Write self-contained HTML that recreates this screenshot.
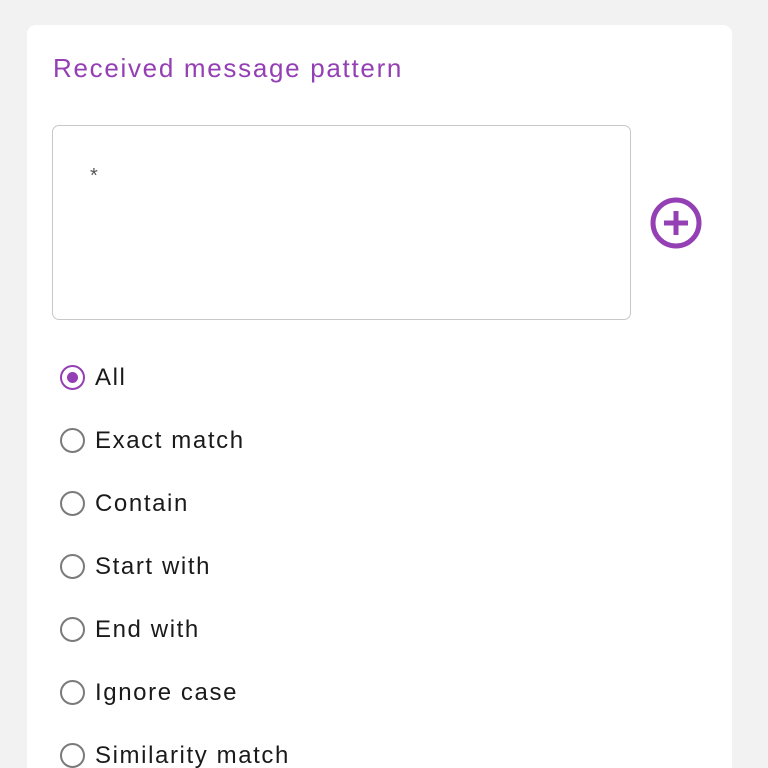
<!DOCTYPE html>
<html style="overflow:hidden"><head><style>
html,body{overflow:hidden;height:768px}
body{margin:0;width:768px;background:#f2f2f2;font-family:"Liberation Sans",sans-serif;position:relative}
.card{position:absolute;left:27px;top:25px;width:705px;height:760px;background:#fff;border-radius:9px}
.title{position:absolute;left:53px;top:53px;font-size:26px;color:#9440b4;letter-spacing:1.7px}
.box{position:absolute;left:52px;top:125px;width:577px;height:193px;border:1.5px solid #c8c8c8;border-radius:7px;background:#fff}
.star{position:absolute;left:90px;top:165px;font-size:20px;color:#555}
.r{position:absolute;left:60px;height:28px;font-size:24px;color:#1a1a1a;line-height:28px}
.r i{position:absolute;left:0;top:1px;width:25px;height:25px;border:2.5px solid #7a7a7a;border-radius:50%;box-sizing:border-box}
.r.on i{border-color:#9440b4}
.r.on i:after{content:"";position:absolute;left:4.5px;top:4.5px;width:11px;height:11px;border-radius:50%;background:#9440b4}
.r span{position:absolute;left:35px;top:0px;white-space:nowrap;letter-spacing:1.6px}
</style></head><body>
<div class="card"></div>
<div class="title">Received message pattern</div>
<div class="box"></div>
<div class="star">*</div>
<svg style="position:absolute;left:650px;top:197px" width="54" height="54" viewBox="0 0 54 54"><circle cx="26" cy="26" r="23" fill="none" stroke="#9440b4" stroke-width="5"/><path d="M26 14V38M14 26H38" stroke="#9440b4" stroke-width="5"/></svg>
<div class="r on" style="top:364px"><i></i><span>All</span></div>
<div class="r" style="top:427px"><i></i><span>Exact match</span></div>
<div class="r" style="top:490px"><i></i><span>Contain</span></div>
<div class="r" style="top:553px"><i></i><span>Start with</span></div>
<div class="r" style="top:616px"><i></i><span>End with</span></div>
<div class="r" style="top:679px"><i></i><span>Ignore case</span></div>
<div class="r" style="top:742px"><i></i><span>Similarity match</span></div>
</body></html>
